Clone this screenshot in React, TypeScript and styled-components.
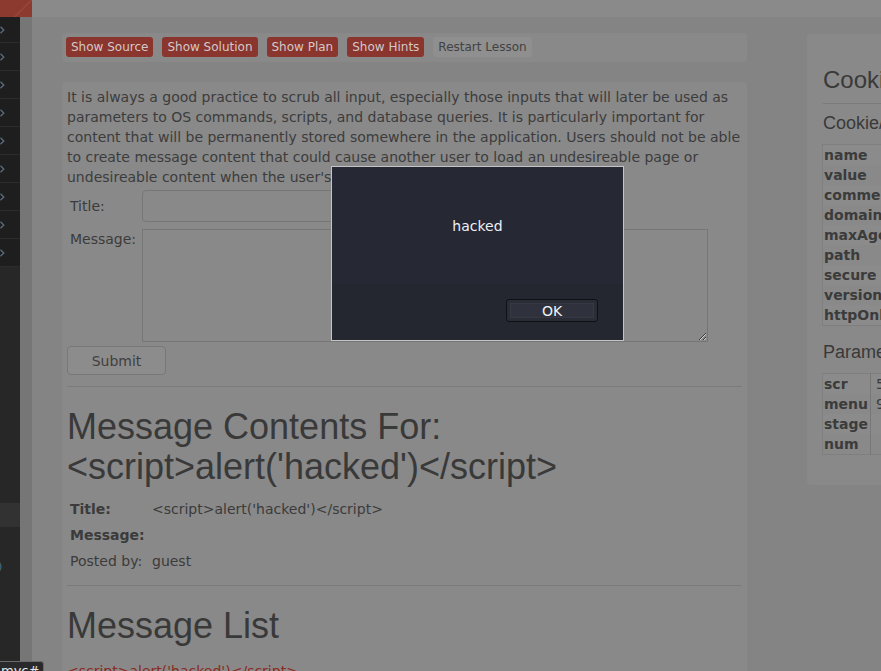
import React from "react";
import styled, { createGlobalStyle } from "styled-components";

const GlobalStyle = createGlobalStyle`
  html, body {
    margin: 0;
    padding: 0;
    background: #848484;
    overflow: hidden;
  }
`;

const Page = styled.div`
  position: relative;
  width: 881px;
  height: 671px;
  overflow: hidden;
  display: flex;
  flex-direction: column;
  background: #848484;
  font-family: "DejaVu Sans", sans-serif;
  color: #3b3b3b;
`;

const TopBar = styled.div`
  height: 17px;
  flex-shrink: 0;
  display: flex;
  background: #8a8a8a;
`;

const Brand = styled.div`
  width: 32px;
  background: linear-gradient(135deg, #8c3a2f 0 62%, #9a4a40 64%, #8c3a2f 68%);
`;

const Body = styled.div`
  flex: 1;
  display: flex;
  min-height: 0;
`;

const Sidebar = styled.nav`
  width: 20px;
  flex-shrink: 0;
  background: #272727;
  display: flex;
  flex-direction: column;
  overflow: hidden;
`;

const NavRow = styled.div`
  height: 28px;
  flex-shrink: 0;
  box-sizing: border-box;
  background: #1e1e1e;
  border-bottom: 1px solid #2c2c2c;
  display: flex;
  align-items: center;
  &:first-child {
    height: 26px;
  }
`;

const SubRow = styled.div<{ $selected?: boolean; $gap?: number }>`
  height: 24px;
  flex-shrink: 0;
  margin-top: ${(p) => p.$gap ?? 0}px;
  background: ${(p) => (p.$selected ? "#323232" : "transparent")};
  display: flex;
  align-items: center;
  font-size: 11px;
  color: #4a6f86;
  line-height: 24px;
  margin-left: -2px;
`;

const Rail = styled.div`
  width: 12px;
  flex-shrink: 0;
  background: #767676;
`;

const Main = styled.main`
  width: 775px;
  flex-shrink: 0;
  box-sizing: border-box;
  padding: 16px 60px 0 30px;
`;

const Toolbar = styled.div`
  background: #898989;
  border-radius: 4px;
  padding: 4px 4px 5px;
  display: flex;
  gap: 9px;
`;

const ActionButton = styled.button<{ $variant?: "danger" | "plain" }>`
  height: 20px;
  padding: 0 5px;
  border: none;
  border-radius: 3px;
  font-family: "DejaVu Sans", sans-serif;
  font-size: 12px;
  line-height: 20px;
  background: ${(p) => (p.$variant === "plain" ? "#8f8f8f" : "#8a352e")};
  color: ${(p) => (p.$variant === "plain" ? "#424242" : "#d2c9c8")};
`;

const ContentCard = styled.section`
  margin-top: 20px;
  background: #898989;
  border-radius: 4px;
  padding: 5px;
  min-height: 700px;
`;

const Intro = styled.p`
  margin: 0;
  font-family: "DejaVu Sans", sans-serif;
  font-size: 14px;
  line-height: 20px;
  color: #3c3c3c;
`;

const FormGrid = styled.form`
  margin-top: 3px;
  display: grid;
  grid-template-columns: 75px 1fr;
  row-gap: 7px;
`;

const FieldLabel = styled.label<{ $top?: boolean }>`
  padding-left: 3px;
  font-size: 14px;
  line-height: 20px;
  align-self: ${(p) => (p.$top ? "start" : "center")};
`;

const TextInput = styled.input`
  display: block;
  width: 400px;
  height: 32px;
  box-sizing: border-box;
  border: 1px solid #767676;
  border-radius: 4px;
  background: transparent;
`;

const TextArea = styled.textarea`
  display: block;
  width: 566px;
  height: 113px;
  box-sizing: border-box;
  border: 1px solid #767676;
  border-radius: 0;
  background: transparent;
  resize: both;
`;

const SubmitButton = styled.button`
  grid-column: 1 / -1;
  margin-top: -3px;
  width: 99px;
  height: 29px;
  border: 1px solid #787878;
  border-radius: 4px;
  background: #8c8c8c;
  font-family: "DejaVu Sans", sans-serif;
  font-size: 14px;
  color: #404040;
`;

const Rule = styled.hr`
  margin: 11px 0 0;
  border: 0;
  border-top: 1px solid #7b7b7b;
`;

const Heading = styled.h1`
  margin: 20px 0 10px;
  font-family: "Liberation Sans", Arial, sans-serif;
  font-weight: 400;
  font-size: 36px;
  line-height: 39.6px;
  color: #393939;
`;

const Details = styled.div`
  display: grid;
  grid-template-columns: 85px 1fr;
  grid-auto-rows: 26px;
  align-items: center;
  font-size: 14px;
`;

const DetailLabel = styled.div<{ $bold?: boolean }>`
  padding-left: 3px;
  font-weight: ${(p) => (p.$bold ? 700 : 400)};
`;

const DetailValue = styled.div``;

const MessageList = styled.ul`
  list-style: none;
  margin: 10px 0 0;
  padding: 0;
`;

const MessageLink = styled.a`
  display: block;
  padding-top: 5px;
  font-size: 14px;
  line-height: 20px;
  color: #8b2a22;
  text-decoration: none;
`;

const RightCol = styled.aside`
  width: 320px;
  flex-shrink: 0;
  padding-top: 17px;
`;

const SideCard = styled.div`
  width: 300px;
  height: 451px;
  box-sizing: border-box;
  background: #898989;
  border-radius: 4px;
  padding: 13px 16px 0 15px;
  overflow: hidden;
`;

const PanelTitle = styled.h3`
  margin: 20px 0 10px 1px;
  font-family: "Liberation Sans", Arial, sans-serif;
  font-weight: 400;
  font-size: 24px;
  line-height: 26.4px;
  white-space: nowrap;
  color: #393939;
`;

const PanelRule = styled.hr`
  margin: 0 0 0 1px;
  border: 0;
  border-top: 1px solid #7b7b7b;
`;

const PanelSubtitle = styled.h4<{ $gap: number }>`
  margin: ${(p) => p.$gap}px 0 10px 1px;
  font-family: "Liberation Sans", Arial, sans-serif;
  font-weight: 400;
  font-size: 18px;
  line-height: 19.8px;
  white-space: nowrap;
  color: #393939;
`;

const InfoTable = styled.table`
  border-collapse: collapse;
  border: 1px solid #7f7f7f;
  font-size: 14px;
  white-space: nowrap;
  tr:nth-child(odd) td {
    background: #8b8b8b;
  }
`;

const KeyCell = styled.td<{ $width?: number }>`
  height: 20px;
  padding: 0 2px 0 1px;
  line-height: 20px;
  font-weight: 700;
  width: ${(p) => (p.$width ? `${p.$width}px` : "auto")};
  box-sizing: border-box;
`;

const ValueCell = styled.td`
  height: 20px;
  padding: 0 5px;
  line-height: 20px;
  border-left: 1px solid #777;
  min-width: 150px;
`;

const AlertDialog = styled.div`
  position: absolute;
  left: 331px;
  top: 166px;
  width: 293px;
  height: 175px;
  box-sizing: border-box;
  border: 1px solid #c4c4c6;
  display: grid;
  grid-template-rows: 117px 1fr;
  font-family: "DejaVu Sans", sans-serif;
`;

const AlertMessage = styled.div`
  background: #262833;
  display: flex;
  align-items: center;
  justify-content: center;
  font-size: 14px;
  color: #eef0f6;
`;

const AlertFooter = styled.div`
  background: #242630;
  display: flex;
  justify-content: flex-end;
  align-items: flex-start;
  padding: 15px 25px 0 0;
`;

const OkButton = styled.button`
  width: 92px;
  height: 23px;
  border: 1px solid #0f1014;
  border-radius: 3px;
  background: #2f323d;
  box-shadow: inset 0 0 0 3px #2a2c36, inset 0 0 0 4px #363944;
  font-family: "DejaVu Sans", sans-serif;
  font-size: 14px;
  color: #f2f2f2;
  padding: 0;
`;

const StatusBubble = styled.div`
  position: absolute;
  left: 0;
  bottom: 0;
  height: 10px;
  padding: 0 4px 0 1px;
  box-sizing: border-box;
  overflow: hidden;
  background: #2a2a2c;
  border-top: 1px solid #6a6a6a;
  border-right: 1px solid #6a6a6a;
  border-top-right-radius: 3px;
  font-family: "DejaVu Sans", sans-serif;
  font-size: 13px;
  line-height: 17px;
  color: #e8e8e8;
`;

const Chevron = () => (
  <svg width="5" height="8" viewBox="0 0 5 8">
    <path d="M0.5 0.8 L3.8 4 L0.5 7.2" fill="none" stroke="#5a6c7e" strokeWidth="1.3" />
  </svg>
);

const cookieKeys = ["name", "value", "comment", "domain", "maxAge", "path", "secure", "version", "httpOnly"];
const cookieValues = ["JSESSIONID", "4F0B8E2C", "", "", "-1", "", "false", "0", "false"];
const params: [string, string][] = [
  ["scr", "5824"],
  ["menu", "900"],
  ["stage", ""],
  ["num", ""],
];

const script = "<script>alert('hacked')</script>";

export default function App() {
  return (
    <>
      <GlobalStyle />
      <Page>
        <TopBar>
          <Brand />
        </TopBar>
        <Body>
          <Sidebar>
            {Array.from({ length: 9 }).map((_, i) => (
              <NavRow key={i}>
                <Chevron />
              </NavRow>
            ))}
            <SubRow $selected $gap={236} />
            <SubRow $gap={28}>)</SubRow>
          </Sidebar>
          <Rail />
          <Main>
            <Toolbar>
              <ActionButton>Show Source</ActionButton>
              <ActionButton>Show Solution</ActionButton>
              <ActionButton>Show Plan</ActionButton>
              <ActionButton>Show Hints</ActionButton>
              <ActionButton $variant="plain">Restart Lesson</ActionButton>
            </Toolbar>
            <ContentCard>
              <Intro>
                It is always a good practice to scrub all input, especially those inputs that will later be used as
                parameters to OS commands, scripts, and database queries. It is particularly important for content
                that will be permanently stored somewhere in the application. Users should not be able to create
                message content that could cause another user to load an undesireable page or undesireable content
                when the user's message is retrieved.
              </Intro>
              <FormGrid onSubmit={(e) => e.preventDefault()}>
                <FieldLabel>Title:</FieldLabel>
                <div>
                  <TextInput />
                </div>
                <FieldLabel $top>Message:</FieldLabel>
                <div>
                  <TextArea />
                </div>
                <SubmitButton type="submit">Submit</SubmitButton>
              </FormGrid>
              <Rule />
              <Heading>
                Message Contents For:
                <br />
                {script}
              </Heading>
              <Details>
                <DetailLabel $bold>Title:</DetailLabel>
                <DetailValue>{script}</DetailValue>
                <DetailLabel $bold>Message:</DetailLabel>
                <DetailValue />
                <DetailLabel>Posted by:</DetailLabel>
                <DetailValue>guest</DetailValue>
              </Details>
              <Rule />
              <Heading>Message List</Heading>
              <MessageList>
                <li>
                  <MessageLink href="#">{script}</MessageLink>
                </li>
              </MessageList>
            </ContentCard>
          </Main>
          <RightCol>
            <SideCard>
              <PanelTitle>Cookies / Parameters</PanelTitle>
              <PanelRule />
              <PanelSubtitle $gap={10}>Cookie/JSESSIONID</PanelSubtitle>
              <InfoTable>
                <tbody>
                  {cookieKeys.map((k, i) => (
                    <tr key={k}>
                      <KeyCell $width={72}>{k}</KeyCell>
                      <ValueCell>{cookieValues[i]}</ValueCell>
                    </tr>
                  ))}
                </tbody>
              </InfoTable>
              <PanelSubtitle $gap={17}>Parameters</PanelSubtitle>
              <InfoTable>
                <tbody>
                  {params.map(([k, v]) => (
                    <tr key={k}>
                      <KeyCell $width={48}>{k}</KeyCell>
                      <ValueCell>{v}</ValueCell>
                    </tr>
                  ))}
                </tbody>
              </InfoTable>
            </SideCard>
          </RightCol>
        </Body>
        <AlertDialog role="alertdialog">
          <AlertMessage>hacked</AlertMessage>
          <AlertFooter>
            <OkButton>OK</OkButton>
          </AlertFooter>
        </AlertDialog>
        <StatusBubble>mvc#</StatusBubble>
      </Page>
    </>
  );
}
